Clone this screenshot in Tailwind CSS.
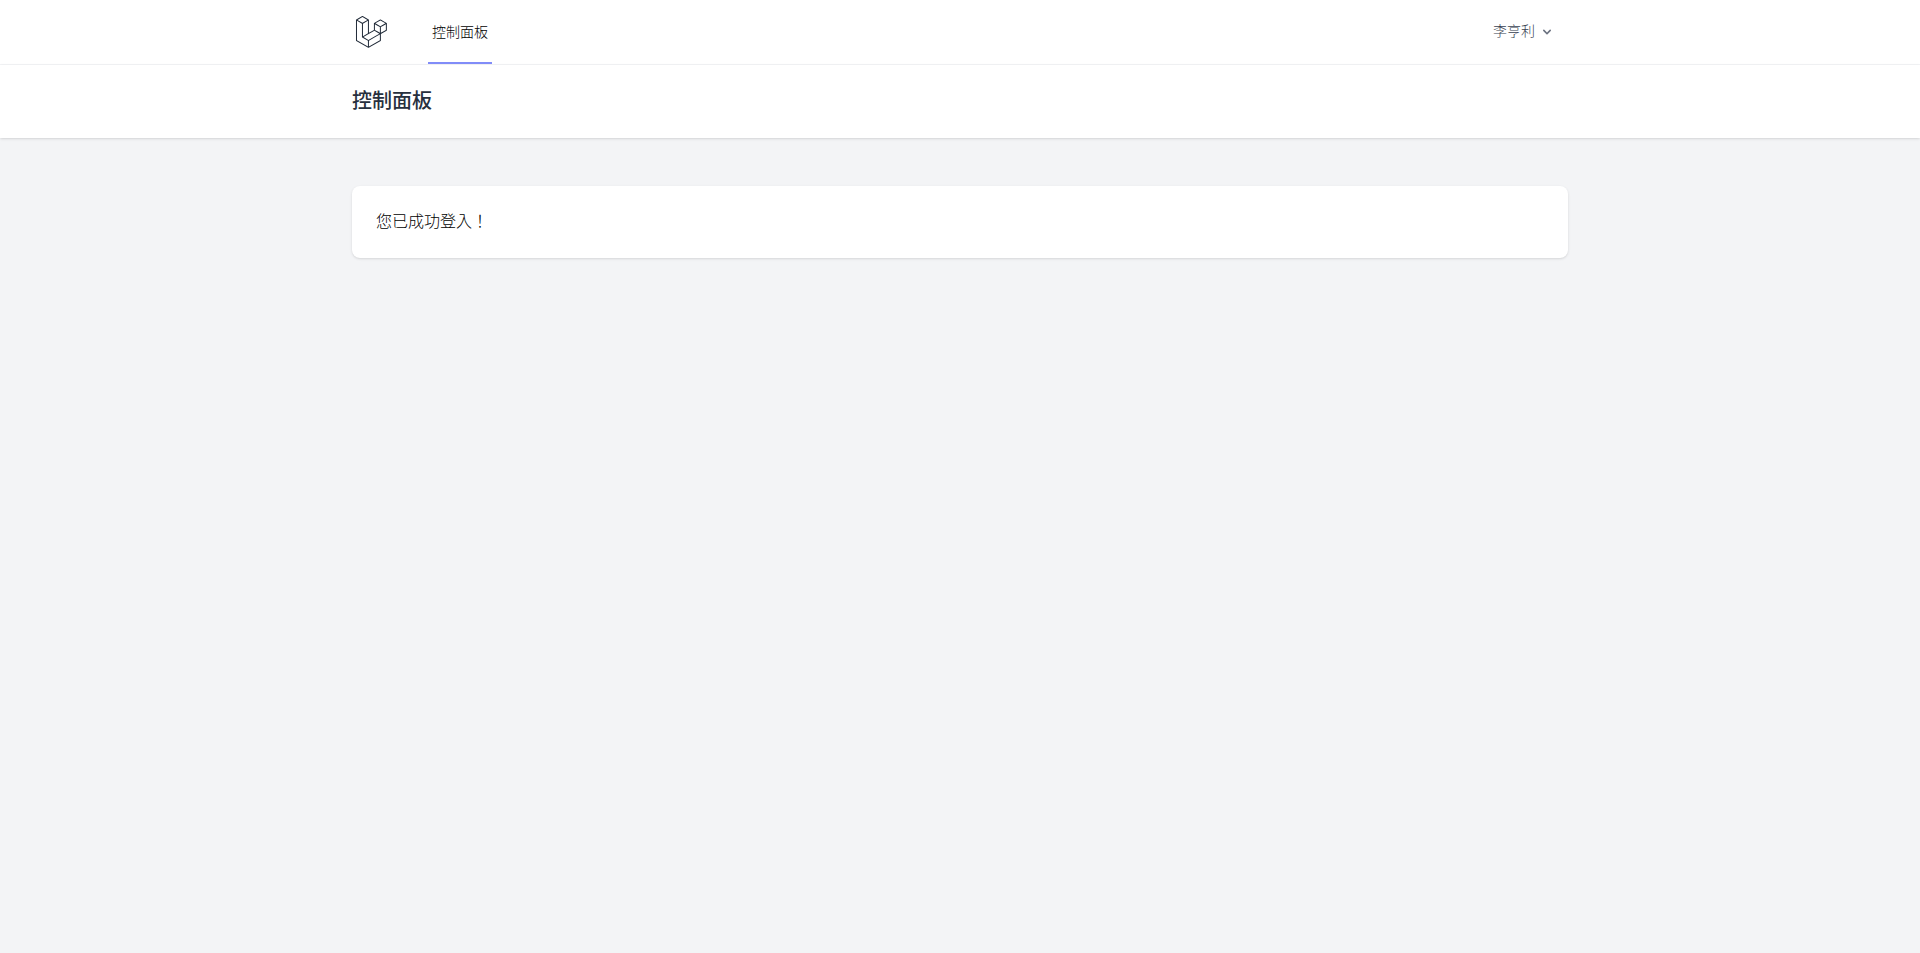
<!DOCTYPE html>
<html lang="zh-TW">
<head>
  <meta charset="UTF-8">
  <meta name="viewport" content="width=device-width, initial-scale=1.0">
  <title>控制面板</title>
  <script src="https://cdn.jsdelivr.net/npm/@tailwindcss/browser@4"></script>
</head>
<body class="bg-white font-['Noto_Sans_CJK_TC','Noto_Sans',sans-serif] text-[#111827]">
  <div class="min-h-[953px] bg-[#f3f4f6]">

    <!-- Navigation -->
    <nav class="bg-white border-b border-[#f3f4f6]">
      <div class="max-w-7xl mx-auto px-8">
        <div class="flex justify-between h-16">
          <div class="flex">
            <a href="#" class="flex items-center shrink-0">
              <svg class="block h-9 w-9 fill-current text-[#1f2937]" viewBox="0 0 316 316" xmlns="http://www.w3.org/2000/svg">
                <path d="M305.8 81.125C305.77 80.995 305.69 80.885 305.65 80.755C305.56 80.525 305.49 80.285 305.37 80.075C305.29 79.935 305.17 79.815 305.07 79.685C304.94 79.515 304.83 79.325 304.68 79.175C304.55 79.045 304.39 78.955 304.25 78.845C304.09 78.715 303.95 78.575 303.77 78.475L251.32 48.275C249.97 47.495 248.31 47.495 246.96 48.275L194.51 78.475C194.33 78.575 194.19 78.725 194.03 78.845C193.89 78.955 193.73 79.045 193.6 79.175C193.45 79.325 193.34 79.515 193.21 79.685C193.11 79.815 192.99 79.935 192.91 80.075C192.79 80.285 192.71 80.525 192.63 80.755C192.58 80.875 192.51 80.995 192.48 81.125C192.38 81.495 192.33 81.875 192.33 82.265V139.625L148.62 164.795V52.575C148.62 52.185 148.57 51.805 148.47 51.435C148.44 51.305 148.36 51.195 148.32 51.065C148.23 50.835 148.16 50.595 148.04 50.385C147.96 50.245 147.84 50.125 147.74 49.995C147.61 49.825 147.5 49.635 147.35 49.485C147.22 49.355 147.06 49.265 146.92 49.155C146.76 49.025 146.62 48.885 146.44 48.785L93.99 18.585C92.64 17.805 90.98 17.805 89.63 18.585L37.18 48.785C37 48.885 36.86 49.035 36.7 49.155C36.56 49.265 36.4 49.355 36.27 49.485C36.12 49.635 36.01 49.825 35.88 49.995C35.78 50.125 35.66 50.245 35.58 50.385C35.46 50.595 35.38 50.835 35.3 51.065C35.25 51.185 35.18 51.305 35.15 51.435C35.05 51.805 35 52.185 35 52.575V232.235C35 233.795 35.84 235.245 37.19 236.025L142.1 296.425C142.33 296.555 142.58 296.635 142.82 296.725C142.93 296.765 143.04 296.835 143.16 296.865C143.53 296.965 143.9 297.015 144.28 297.015C144.66 297.015 145.03 296.965 145.4 296.865C145.5 296.835 145.59 296.775 145.69 296.745C145.95 296.655 146.21 296.565 146.45 296.435L251.36 236.035C252.72 235.255 253.55 233.815 253.55 232.245V174.885L303.81 145.945C305.17 145.165 306 143.725 306 142.155V82.265C305.95 81.875 305.89 81.495 305.8 81.125ZM144.2 227.205L100.57 202.515L146.39 176.135L196.66 147.195L240.33 172.335L208.29 190.625L144.2 227.205ZM244.75 114.995V164.795L226.39 154.225L201.03 139.625V89.825L219.39 100.395L244.75 114.995ZM249.12 57.105L292.81 82.265L249.12 107.425L205.43 82.265L249.12 57.105ZM114.49 184.425L96.13 194.995V85.305L121.49 70.705L139.85 60.135V169.815L114.49 184.425ZM91.76 27.425L135.45 52.585L91.76 77.745L48.07 52.585L91.76 27.425ZM43.67 60.135L62.03 70.705L87.39 85.305V202.545V202.555V202.565C87.39 202.735 87.44 202.895 87.46 203.055C87.49 203.265 87.49 203.485 87.55 203.695V203.705C87.6 203.875 87.69 204.035 87.76 204.195C87.84 204.375 87.89 204.575 87.99 204.745C87.99 204.745 87.99 204.755 88 204.755C88.09 204.905 88.22 205.035 88.33 205.175C88.45 205.335 88.55 205.495 88.69 205.635L88.7 205.645C88.82 205.765 88.98 205.855 89.12 205.965C89.28 206.085 89.42 206.225 89.59 206.325C89.6 206.325 89.6 206.325 89.61 206.335C89.62 206.335 89.62 206.345 89.63 206.345L139.87 234.775V285.065L43.67 229.705V60.135ZM244.75 229.705L148.58 285.075V234.775L219.8 194.115L244.75 179.875V229.705ZM297.2 139.625L253.49 164.795V114.995L278.85 100.395L297.21 89.825V139.625H297.2Z"/>
              </svg>
            </a>
            <div class="flex ml-10">
              <a href="#" class="inline-flex items-center px-1 pb-px border-b-2 border-[#818cf8] text-sm leading-5 font-light text-black">控制面板</a>
            </div>
          </div>

          <!-- User menu -->
          <div class="flex items-center">
            <button class="inline-flex items-center px-3 py-2 border border-transparent text-sm leading-4 font-light text-[#374151] bg-white">
              <div class="pb-[4px]">李亨利</div>
              <div class="ml-1 text-[#6b7280]">
                <svg class="h-4 w-4 fill-current" xmlns="http://www.w3.org/2000/svg" viewBox="0 0 20 20">
                  <path fill-rule="evenodd" clip-rule="evenodd" d="M5.293 7.293a1 1 0 011.414 0L10 10.586l3.293-3.293a1 1 0 111.414 1.414l-4 4a1 1 0 01-1.414 0l-4-4a1 1 0 010-1.414z"/>
                </svg>
              </div>
            </button>
          </div>
        </div>
      </div>
    </nav>

    <!-- Page Heading -->
    <header class="bg-white shadow">
      <div class="max-w-7xl mx-auto pt-[22px] pb-[26px] px-8">
        <h2 class="font-medium text-xl leading-[25px] text-[#27303e]">控制面板</h2>
      </div>
    </header>

    <!-- Main Content -->
    <main class="py-12">
      <div class="max-w-7xl mx-auto px-8">
        <div class="bg-white overflow-hidden shadow-sm rounded-lg">
          <div class="pt-[22px] pb-[26px] px-6 leading-6 font-light text-black">您已成功登入！</div>
        </div>
      </div>
    </main>
  </div>
</body>
</html>
